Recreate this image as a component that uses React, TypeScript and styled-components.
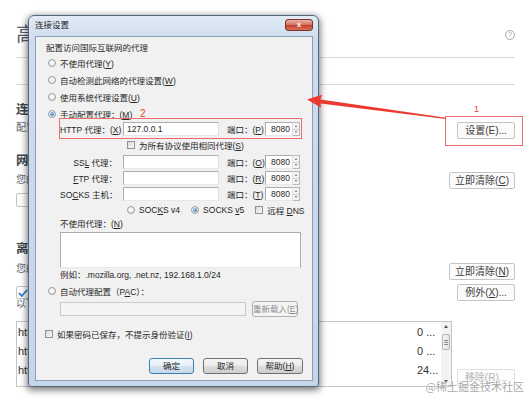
import styled, { createGlobalStyle, css } from 'styled-components';

const uiFont = `"Liberation Sans", "Noto Sans CJK SC", sans-serif`;

const GlobalStyle = createGlobalStyle`
  html, body {
    margin: 0;
    padding: 0;
    background: #fff;
  }
  body {
    width: 530px;
    height: 398px;
    overflow: hidden;
  }
`;

const Page = styled.div`
  position: relative;
  width: 530px;
  height: 398px;
  overflow: hidden;
  background: #fff;
  font-family: ${uiFont};
  color: #424e5a;
`;

/* ---------- preferences page behind the dialog ---------- */

const Prefs = styled.div`
  padding: 0 15px 0 16px;
`;

const Header = styled.header`
  box-sizing: border-box;
  height: 58px;
  padding-top: 13px;
  display: flex;
  align-items: center;
  justify-content: space-between;
  border-bottom: 1px solid #d8d8d8;
`;

const PageTitle = styled.h1`
  margin: 0;
  font-size: 20px;
  line-height: 24px;
  font-weight: 400;
  color: #55606b;
`;

const HelpIcon = styled.span`
  box-sizing: border-box;
  width: 10px;
  height: 10px;
  border: 1px solid #a8a8a8;
  border-radius: 50%;
  font-size: 7px;
  line-height: 8px;
  text-align: center;
  color: #999;
`;

const TabStrip = styled.nav`
  box-sizing: border-box;
  height: 27px;
  border-bottom: 1px solid #d8d8d8;
  display: flex;
  align-items: center;
  gap: 18px;
  padding-left: 40px;
  font-size: 10px;
  color: #555;
`;

const Section = styled.section<{ $top: number }>`
  margin-top: ${p => p.$top}px;
`;

const SectionTitle = styled.h2`
  margin: 0;
  font-size: 12.5px;
  line-height: 16px;
  font-weight: 700;
  color: #3c4650;
  white-space: nowrap;
`;

const Line = styled.div<{ $top: number }>`
  margin-top: ${p => p.$top}px;
  display: flex;
  justify-content: space-between;
  align-items: flex-start;
`;

const Desc = styled.p<{ $top?: number }>`
  margin: ${p => p.$top ?? 0}px 0 0;
  font-size: 10px;
  line-height: 12px;
  color: #5e6972;
  white-space: nowrap;
`;

const PrefButton = styled.button<{ $disabled?: boolean; $bottom?: number }>`
  box-sizing: border-box;
  flex: none;
  height: 17px;
  min-width: 58px;
  margin-bottom: ${p => p.$bottom ?? 0}px;
  padding: 0 5px;
  border: 1px solid #c4c4c4;
  border-radius: 2px;
  background: #fbfbfb;
  font-family: ${uiFont};
  font-size: 10px;
  line-height: 15px;
  color: #3a3a3a;

  ${p => p.$disabled && css`
    color: #b3b3b3;
    border-color: #dedede;
    background: #fdfdfd;
  `}
`;

const CheckLine = styled.label<{ $top?: number }>`
  margin-top: ${p => p.$top ?? 0}px;
  display: flex;
  align-items: center;
  gap: 6px;
  font-size: 10px;
  color: #5e6972;
  white-space: nowrap;
`;

const PrefCheck = styled.span<{ $size: number }>`
  box-sizing: border-box;
  flex: none;
  width: ${p => p.$size}px;
  height: ${p => p.$size}px;
  border: 1px solid #c4c4c4;
  border-radius: 2px;
  background: #fff;
  display: flex;
  align-items: center;
  justify-content: center;
`;

const Note = styled.p`
  margin: -3px 0 0;
  font-size: 10px;
  line-height: 12px;
  color: #5e6972;
  white-space: nowrap;
`;

const ListLine = styled.div`
  margin-top: 11px;
  display: flex;
  gap: 5px;
  align-items: flex-end;
`;

const SiteList = styled.div`
  flex: 1;
  box-sizing: border-box;
  height: 66px;
  border: 1px solid #c4c4c4;
  background: #fff;
  display: flex;
  overflow: hidden;
`;

const Rows = styled.div`
  flex: 1;
  min-width: 0;
`;

const SiteRow = styled.div`
  display: grid;
  grid-template-columns: 1fr 24px;
  align-items: center;
  height: 19px;
  padding-left: 1px;
  font-size: 11px;
  color: #333;
  white-space: nowrap;
  overflow: hidden;
`;

const Scrollbar = styled.div`
  width: 10px;
  display: flex;
  flex-direction: column;
  align-items: center;
  background: #f3f3f3;
`;

const ScrollArrow = styled.span<{ $down?: boolean }>`
  height: 9px;
  display: flex;
  align-items: center;
  justify-content: center;

  &::before {
    content: '';
    border-left: 2px solid transparent;
    border-right: 2px solid transparent;
    ${p => p.$down
      ? css`border-top: 3px solid #555;`
      : css`border-bottom: 3px solid #555;`}
  }
`;

const Thumb = styled.span`
  box-sizing: border-box;
  margin-top: 3px;
  width: 8px;
  height: 16px;
  border: 1px solid #b5b5b5;
  border-radius: 2px;
  background: linear-gradient(to right, #f6f6f6, #e1e1e1);
  display: flex;
  flex-direction: column;
  align-items: center;
  justify-content: center;
  gap: 1px;
`;

const Grip = styled.span`
  width: 4px;
  height: 1px;
  background: #8c8c8c;
`;

const ScrollSpace = styled.span`
  flex: 1;
`;

/* ---------- Windows 7 style dialog ---------- */

const Dialog = styled.div`
  position: absolute;
  left: 28px;
  top: 15px;
  width: 291px;
  height: 372px;
  box-sizing: border-box;
  padding: 0 5px 5px 6px;
  border: 1px solid #56667b;
  border-radius: 6px 6px 3px 3px;
  background: linear-gradient(to bottom, #e2ebf6 0, #cddcee 24px, #c5d6eb 100%);
  box-shadow: 0 2px 7px 1px rgba(0, 0, 0, 0.55);
  display: flex;
  flex-direction: column;
  font-family: ${uiFont};
  font-size: 8.5px;
  color: #262626;
`;

const TitleBar = styled.div`
  height: 20px;
  flex: none;
  display: flex;
  justify-content: space-between;
  align-items: flex-start;
`;

const DialogTitle = styled.span`
  line-height: 19px;
  color: #1e1e1e;
`;

const CloseButton = styled.span`
  box-sizing: border-box;
  margin-top: 3px;
  width: 28px;
  height: 12px;
  border: 1px solid #7a3328;
  border-radius: 3px;
  background: linear-gradient(to bottom, #eab0a2 0, #d77563 45%, #c5432f 55%, #d7735a 100%);
  color: #fff;
  font-family: "Liberation Sans", sans-serif;
  font-size: 8px;
  font-weight: 700;
  line-height: 10px;
  text-align: center;
`;

const Client = styled.div`
  flex: 1;
  background: #f1f1f1;
  border: 1px solid #8d9fb6;
  padding-top: 5px;
  display: flex;
  flex-direction: column;
`;

const Heading = styled.div`
  height: 12px;
  line-height: 12px;
  padding-left: 10px;
`;

const OptionRow = styled.div<{ $h: number; $indent: number; $top?: number }>`
  height: ${p => p.$h}px;
  margin-top: ${p => p.$top ?? 0}px;
  padding-left: ${p => p.$indent}px;
  display: flex;
  align-items: center;
  gap: 4px;
  white-space: nowrap;
`;

const Radio = styled.span<{ $checked?: boolean }>`
  position: relative;
  box-sizing: border-box;
  flex: none;
  width: 8px;
  height: 8px;
  border-radius: 50%;
  border: 1px solid #9c9c9c;
  background: radial-gradient(circle at 40% 35%, #fff 0, #e2e2e2 85%);

  ${p => p.$checked && css`
    &::after {
      content: '';
      position: absolute;
      left: 1px;
      top: 1px;
      width: 4px;
      height: 4px;
      border-radius: 50%;
      background: radial-gradient(circle at 35% 35%, #9fd0fa, #1b5aa9);
    }
  `}
`;

const Check = styled.span`
  box-sizing: border-box;
  flex: none;
  width: 8px;
  height: 8px;
  border: 1px solid #929292;
  background: linear-gradient(135deg, #d9d9d9, #fafafa);
`;

const Spacer = styled.span<{ $w: number }>`
  width: ${p => p.$w}px;
  flex: none;
`;

const ProxyRow = styled.div<{ $h: number }>`
  height: ${p => p.$h}px;
  padding-left: 24px;
  display: flex;
  align-items: center;
  white-space: nowrap;
`;

const ProxyLabel = styled.span`
  width: 57px;
  text-align: right;
  flex: none;
`;

const Field = styled.div<{ $w: number; $left?: number; $disabled?: boolean }>`
  box-sizing: border-box;
  flex: none;
  width: ${p => p.$w}px;
  height: 14px;
  margin-left: ${p => p.$left ?? 0}px;
  padding: 0 3px;
  border: 1px solid #abadb3;
  border-right-color: #dbdfe6;
  border-bottom-color: #e3e9ef;
  background: #fff;
  line-height: 12px;

  ${p => p.$disabled && css`
    background: #f4f4f4;
    border-color: #c9c9c9;
  `}
`;

const PortLabel = styled.span`
  width: 35px;
  margin-left: 8px;
  flex: none;
`;

const PortBox = styled.div`
  margin-left: 3px;
  display: flex;
  flex: none;
`;

const PortField = styled(Field)`
  text-align: right;
  padding: 0 2px 0 0;
`;

const Spinner = styled.div`
  box-sizing: border-box;
  width: 7px;
  height: 14px;
  border: 1px solid #b8b8b8;
  border-left: none;
  background: #f3f3f3;
  display: flex;
  flex-direction: column;
`;

const SpinHalf = styled.span<{ $down?: boolean }>`
  flex: 1;
  display: flex;
  align-items: center;
  justify-content: center;

  &::before {
    content: '';
    border-left: 1.5px solid transparent;
    border-right: 1.5px solid transparent;
    ${p => p.$down
      ? css`border-top: 2px solid #666;`
      : css`border-bottom: 2px solid #666;`}
  }

  & + & {
    border-top: 1px solid #d0d0d0;
  }
`;

const Plain = styled.div<{ $h: number; $top?: number }>`
  height: ${p => p.$h}px;
  margin-top: ${p => p.$top ?? 0}px;
  padding-left: 24px;
  line-height: ${p => p.$h}px;
  white-space: nowrap;
`;

const TextArea = styled.div`
  box-sizing: border-box;
  margin: 2px 0 0 24px;
  width: 241px;
  height: 36px;
  border: 1px solid #abadb3;
  border-bottom-color: #e3e9ef;
  background: #fff;
`;

const PacRow = styled.div`
  margin-top: 1px;
  height: 16px;
  padding-left: 24px;
  display: flex;
  align-items: center;
  gap: 6px;
`;

const WinButton = styled.span<{ $w: number; $default?: boolean; $disabled?: boolean }>`
  box-sizing: border-box;
  flex: none;
  width: ${p => p.$w}px;
  height: 16px;
  border: 1px solid #707070;
  border-radius: 3px;
  background: linear-gradient(to bottom, #f4f4f4 0, #ebebeb 48%, #dddddd 52%, #cfcfcf 100%);
  line-height: 14px;
  text-align: center;
  white-space: nowrap;

  ${p => p.$default && css`
    border-color: #3c7fb1;
    background: linear-gradient(to bottom, #f3f8fc 0, #e6eff7 48%, #d6e3ef 52%, #c6d8e8 100%);
  `}

  ${p => p.$disabled && css`
    border-color: #adb2b5;
    background: #f4f4f4;
    color: #8d8d8d;
  `}
`;

const ButtonBar = styled.div`
  margin-top: 16px;
  padding-right: 9px;
  display: flex;
  justify-content: flex-end;
  gap: 9px;
`;

/* ---------- annotations drawn over the screenshot ---------- */

const Frame = styled.div<{ $x: number; $y: number; $w: number; $h: number }>`
  position: absolute;
  left: ${p => p.$x}px;
  top: ${p => p.$y}px;
  width: ${p => p.$w}px;
  height: ${p => p.$h}px;
  box-sizing: border-box;
  border: 1px solid #ea6d6a;
  pointer-events: none;
`;

const Marker = styled.span<{ $x: number; $y: number; $size: number }>`
  position: absolute;
  left: ${p => p.$x}px;
  top: ${p => p.$y}px;
  font-family: "Liberation Sans", sans-serif;
  font-size: ${p => p.$size}px;
  line-height: ${p => p.$size}px;
  color: #e8403a;
`;

const ArrowLayer = styled.svg`
  position: absolute;
  left: 0;
  top: 0;
  pointer-events: none;
`;

const Watermark = styled.span`
  position: absolute;
  right: 6px;
  top: 379px;
  font-family: "Noto Sans CJK SC", sans-serif;
  font-size: 11px;
  line-height: 15px;
  color: rgba(150, 150, 150, 0.85);
  text-shadow: 0 0 2px #fff;
`;

const sites = [
  { url: 'http://www.mozilla.org', size: '0 ...' },
  { url: 'http://www.firefox.com', size: '0 ...' },
  { url: 'http://developer.mozilla.org', size: '24...' },
];

const proxies = [
  { label: <>SS<u>L</u> 代理：</>, port: <>端口：(<u>O</u>)</> },
  { label: <><u>F</u>TP 代理：</>, port: <>端口：(<u>R</u>)</> },
  { label: <>SO<u>C</u>KS 主机：</>, port: <>端口：(<u>T</u>)</> },
];

const PortInput = () => (
  <PortBox>
    <PortField $w={28}>8080</PortField>
    <Spinner>
      <SpinHalf />
      <SpinHalf $down />
    </Spinner>
  </PortBox>
);

const CheckMark = () => (
  <svg width="10" height="8" viewBox="0 0 10 8">
    <path d="M1 4.2 L3.8 7 L9 1" fill="none" stroke="#2f7fd6" strokeWidth="1.8" />
  </svg>
);

const App = () => {
  return (
    <Page>
      <GlobalStyle />
      <Prefs>
        <Header>
          <PageTitle>高级</PageTitle>
          <HelpIcon>?</HelpIcon>
        </Header>
        <TabStrip>
          <span>常规</span>
          <span>数据反馈</span>
          <span>网络</span>
          <span>更新</span>
          <span>证书</span>
        </TabStrip>

        <Section $top={17}>
          <SectionTitle>连接</SectionTitle>
          <Line $top={4}>
            <Desc>配置 Firefox 如何连接至国际互联网</Desc>
            <PrefButton>设置(E)...</PrefButton>
          </Line>
        </Section>

        <Section $top={14}>
          <SectionTitle>网络内容缓存</SectionTitle>
          <Line $top={3}>
            <Desc $top={2}>您的网络内容缓存目前使用了 0 字节磁盘空间</Desc>
            <PrefButton>立即清除(<u>C</u>)</PrefButton>
          </Line>
          <CheckLine $top={3}>
            <PrefCheck $size={14} />
            <span>覆盖自动缓存管理</span>
          </CheckLine>
        </Section>

        <Section $top={34}>
          <SectionTitle>离线网站与用户数据</SectionTitle>
          <Line $top={6}>
            <Desc>您的应用程序缓存目前使用了 0 字节磁盘空间</Desc>
            <PrefButton>立即清除(<u>N</u>)</PrefButton>
          </Line>
          <Line $top={4}>
            <CheckLine $top={1}>
              <PrefCheck $size={13}>
                <CheckMark />
              </PrefCheck>
              <span>当网站请求存储数据用于离线使用时告诉我</span>
            </CheckLine>
            <PrefButton>例外(<u>X</u>)...</PrefButton>
          </Line>
          <Note>以下网站获准存储数据用于离线使用：</Note>
          <ListLine>
            <SiteList>
              <Rows>
                {sites.map(site => (
                  <SiteRow key={site.url}>
                    <span>{site.url}</span>
                    <span>{site.size}</span>
                  </SiteRow>
                ))}
              </Rows>
              <Scrollbar>
                <ScrollArrow />
                <Thumb>
                  <Grip />
                  <Grip />
                  <Grip />
                </Thumb>
                <ScrollSpace />
                <ScrollArrow $down />
              </Scrollbar>
            </SiteList>
            <PrefButton $disabled $bottom={1}>移除(<u>R</u>)...</PrefButton>
          </ListLine>
        </Section>
      </Prefs>

      <Dialog>
        <TitleBar>
          <DialogTitle>连接设置</DialogTitle>
          <CloseButton>x</CloseButton>
        </TitleBar>
        <Client>
          <Heading>配置访问国际互联网的代理</Heading>
          <OptionRow $h={17} $indent={12}>
            <Radio />
            <span>不使用代理(<u>Y</u>)</span>
          </OptionRow>
          <OptionRow $h={17} $indent={12}>
            <Radio />
            <span>自动检测此网络的代理设置(<u>W</u>)</span>
          </OptionRow>
          <OptionRow $h={17} $indent={12}>
            <Radio />
            <span>使用系统代理设置(<u>U</u>)</span>
          </OptionRow>
          <OptionRow $h={17} $indent={12}>
            <Radio $checked />
            <span>手动配置代理：(<u>M</u>)</span>
          </OptionRow>

          <ProxyRow $h={14}>
            <ProxyLabel>HTTP 代理：(<u>X</u>)</ProxyLabel>
            <Field $w={96} $left={6}>127.0.0.1</Field>
            <PortLabel>端口：(<u>P</u>)</PortLabel>
            <PortInput />
          </ProxyRow>

          <OptionRow $h={18} $indent={91}>
            <Check />
            <span>为所有协议使用相同代理(<u>S</u>)</span>
          </OptionRow>

          {proxies.map((proxy, i) => (
            <ProxyRow key={i} $h={16}>
              <ProxyLabel>{proxy.label}</ProxyLabel>
              <Field $w={96} $left={6} />
              <PortLabel>{proxy.port}</PortLabel>
              <PortInput />
            </ProxyRow>
          ))}

          <OptionRow $h={16} $indent={91}>
            <Radio />
            <span>SOC<u>K</u>S v4</span>
            <Spacer $w={3} />
            <Radio $checked />
            <span>SOCKS <u>v</u>5</span>
            <Spacer $w={3} />
            <Check />
            <span>远程 <u>D</u>NS</span>
          </OptionRow>

          <Plain $h={12}>不使用代理：(<u>N</u>)</Plain>
          <TextArea />
          <Plain $h={14}>例如：.mozilla.org, .net.nz, 192.168.1.0/24</Plain>

          <OptionRow $h={18} $indent={12}>
            <Radio />
            <span>自动代理配置（P<u>A</u>C）：</span>
          </OptionRow>
          <PacRow>
            <Field $w={186} $disabled />
            <WinButton $w={46} $disabled>重新载入(<u>E</u>)</WinButton>
          </PacRow>

          <OptionRow $h={16} $indent={9} $top={9}>
            <Check />
            <span>如果密码已保存，不提示身份验证(<u>I</u>)</span>
          </OptionRow>

          <ButtonBar>
            <WinButton $w={45} $default>确定</WinButton>
            <WinButton $w={45}>取消</WinButton>
            <WinButton $w={46}>帮助(<u>H</u>)</WinButton>
          </ButtonBar>
        </Client>
      </Dialog>

      <Frame $x={59} $y={118} $w={243} $h={21} />
      <Marker $x={140} $y={109} $size={10}>2</Marker>
      <Frame $x={445} $y={116} $w={78} $h={30} />
      <Marker $x={474} $y={105} $size={9}>1</Marker>
      <ArrowLayer width="530" height="398" viewBox="0 0 530 398">
        <polygon
          points="307,99.4 322,94.8 320.5,99.5 446,117.7 446,118.9 320.5,103.4 321,107.6"
          fill="#ec3a31"
        />
      </ArrowLayer>
      <Watermark>@稀土掘金技术社区</Watermark>
    </Page>
  );
};

export default App;
